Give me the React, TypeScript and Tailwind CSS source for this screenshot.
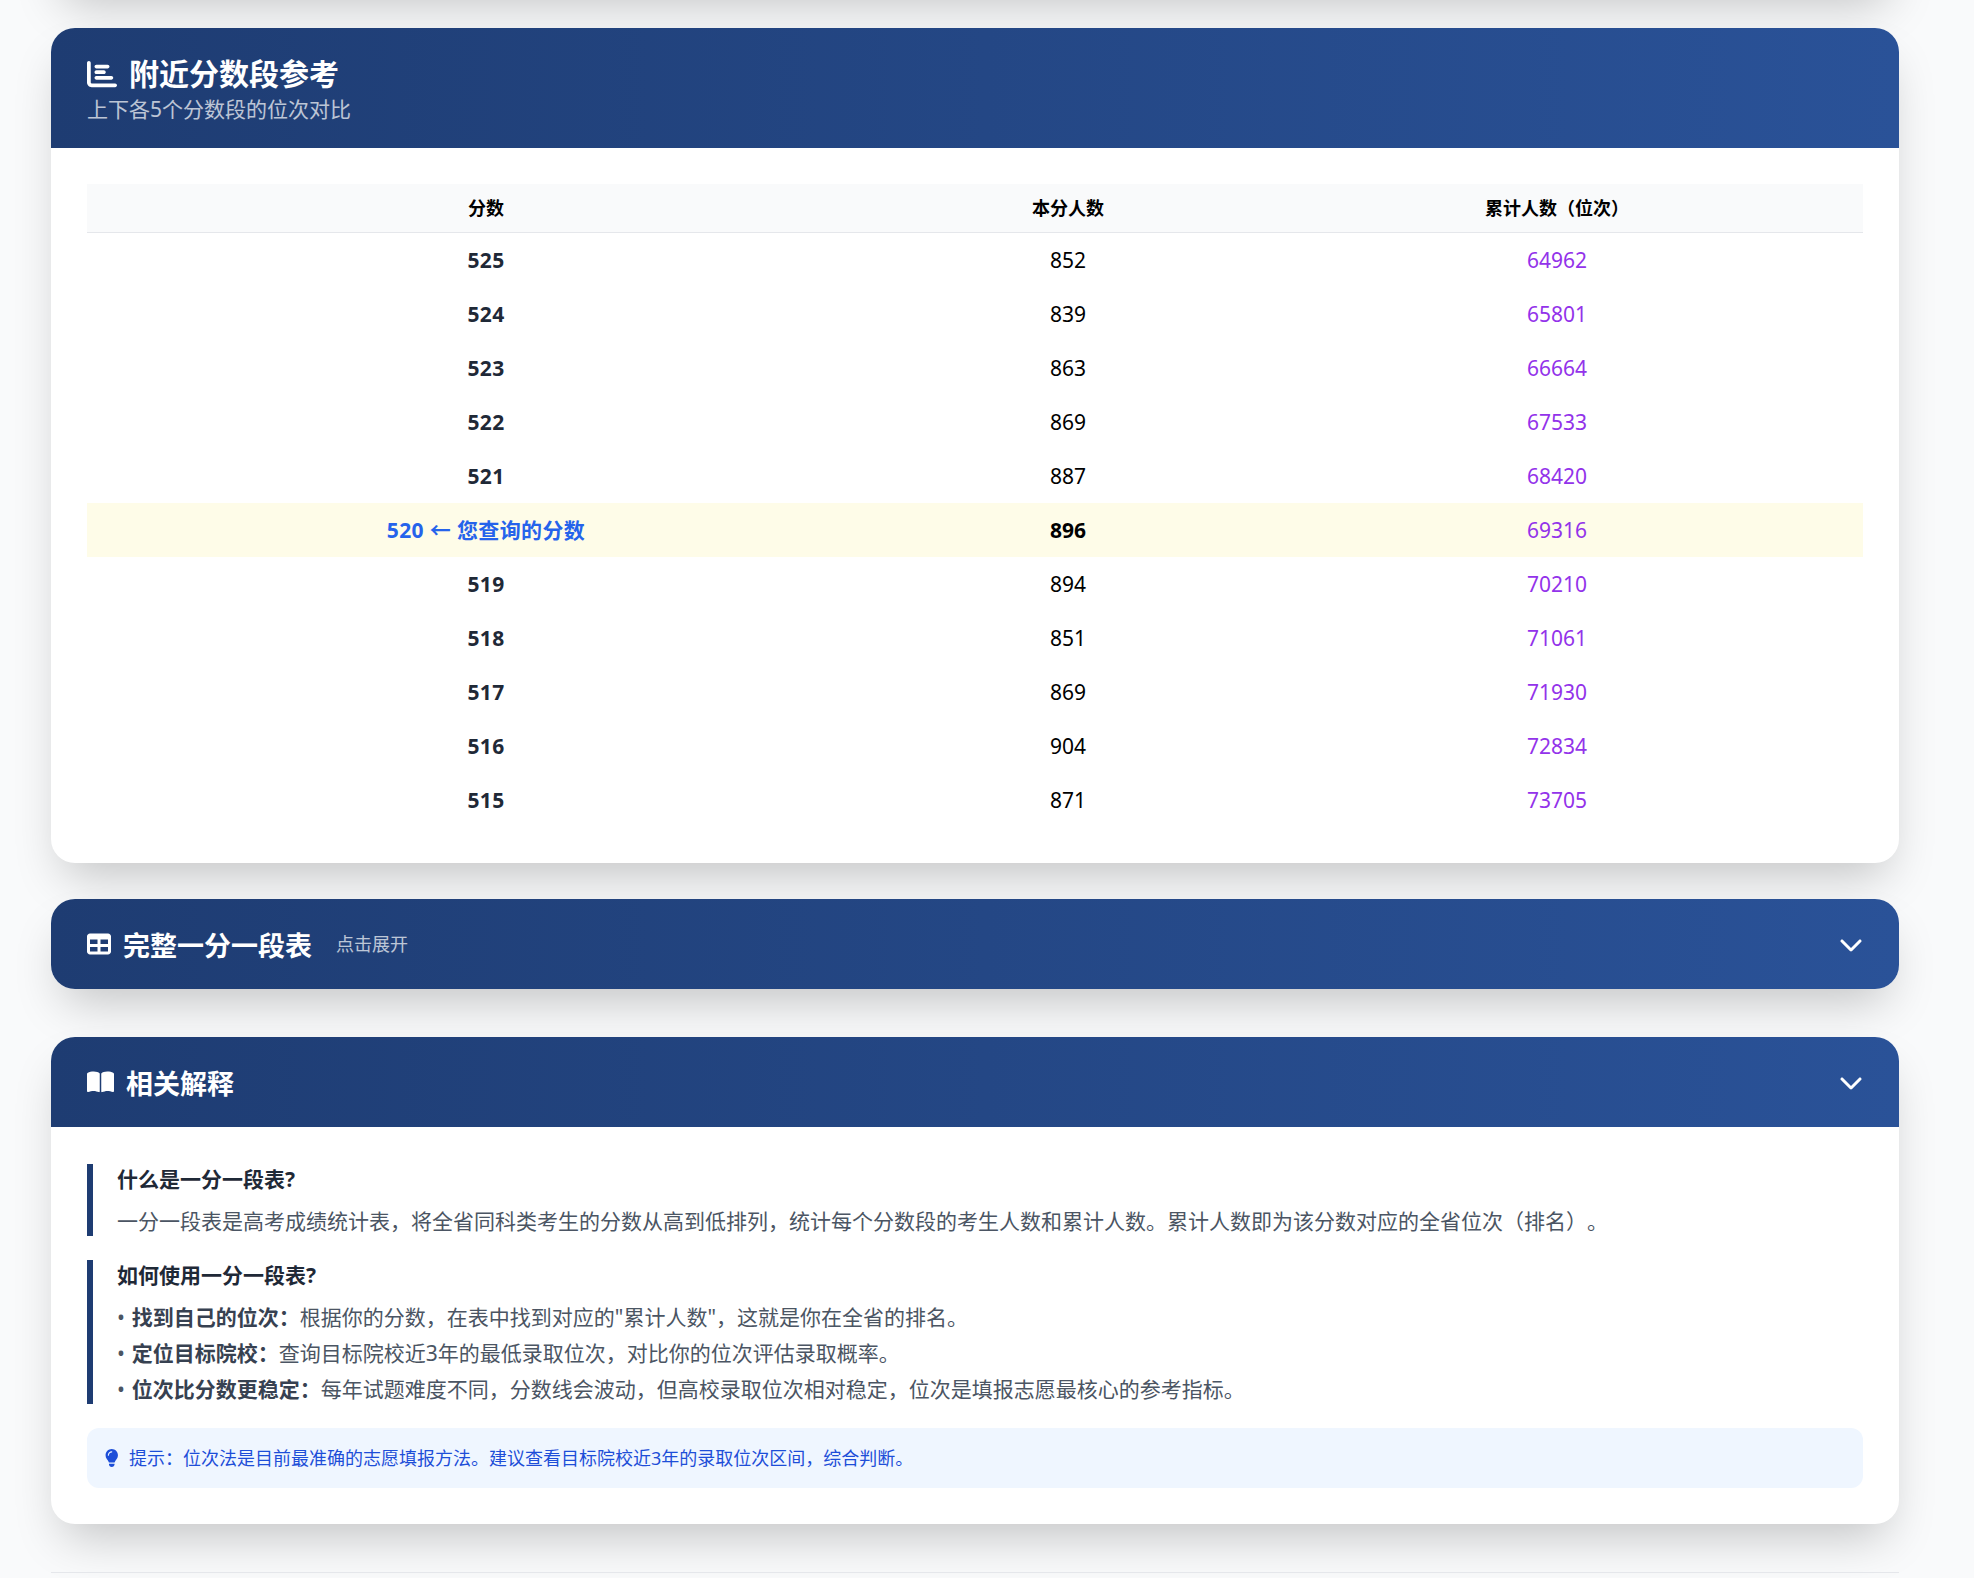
import { FaBookOpen, FaChartBar, FaChevronDown, FaLightbulb, FaTable } from "react-icons/fa6";

const rows = [
  { score: "525", count: "852", total: "64962" },
  { score: "524", count: "839", total: "65801" },
  { score: "523", count: "863", total: "66664" },
  { score: "522", count: "869", total: "67533" },
  { score: "521", count: "887", total: "68420" },
  { score: "520", count: "896", total: "69316", active: true },
  { score: "519", count: "894", total: "70210" },
  { score: "518", count: "851", total: "71061" },
  { score: "517", count: "869", total: "71930" },
  { score: "516", count: "904", total: "72834" },
  { score: "515", count: "871", total: "73705" },
];

const card = "bg-white rounded-2xl shadow-[0_16px_32px_-8px_rgba(0,0,0,0.22)] overflow-hidden";
const head = "bg-gradient-to-r from-[#1e3c72] to-[#2a5298] text-white";

export default function App() {
  return (
    <div className="h-[1578px] w-[1974px] overflow-hidden bg-[#f9fafb]">
      <div
        className="[zoom:1.5] w-[1300px] text-black [text-spacing-trim:space-all]"
        style={{ fontFamily: '"Noto Sans", "Noto Sans CJK SC", sans-serif' }}
      >
        <div className="mx-auto max-w-7xl px-6">
          <div className={`${card} -mt-[105.1px] mb-6 h-[100px]`} />

          <section className={`${card} mb-6`}>
            <header className={`${head} px-6 py-4`}>
              <h2 className="flex h-7 items-center pt-[1px] text-xl leading-7 font-bold">
                <FaChartBar className="mr-2 size-5" />
                附近分数段参考
              </h2>
              <p className="text-sm leading-5 opacity-70">上下各5个分数段的位次对比</p>
            </header>
            <div className="p-6">
              <table className="w-full border-collapse text-sm">
                <thead>
                  <tr className="border-b border-[#e5e7eb] bg-[#f9fafb] text-xs">
                    <th className="w-[532px] px-4 py-2 font-bold">分数</th>
                    <th className="w-[244px] px-4 py-2 font-bold">本分人数</th>
                    <th className="px-4 py-2 font-bold">累计人数（位次）</th>
                  </tr>
                </thead>
                <tbody>
                  {rows.map((r) => (
                    <tr key={r.score} className={r.active ? "bg-[#fefce8]" : ""}>
                      <td className={`px-4 py-2 text-center font-bold tracking-[0.25px] ${r.active ? "text-[#2563eb]" : "text-[#1f2937]"}`}>
                        {r.active ? `${r.score} ← 您查询的分数` : r.score}
                      </td>
                      <td className={`px-4 py-2 text-center ${r.active ? "font-bold" : ""}`}>{r.count}</td>
                      <td className="px-4 py-2 text-center text-[#9333ea]">{r.total}</td>
                    </tr>
                  ))}
                </tbody>
              </table>
            </div>
          </section>

          <section className={`${card} mb-8`}>
            <header className={`${head} flex items-center justify-between px-6 py-4`}>
              <div className="flex items-center">
                <FaTable className="mr-2 size-4" />
                <h2 className="h-7 pt-[1px] text-lg leading-7 font-bold">完整一分一段表</h2>
                <span className="ml-4 text-xs opacity-70">点击展开</span>
              </div>
              <FaChevronDown className="size-4" />
            </header>
          </section>

          <section className={card}>
            <header className={`${head} flex items-center justify-between px-6 py-4`}>
              <div className="flex items-center">
                <FaBookOpen className="mr-2 h-4 w-[18px]" />
                <h2 className="h-7 pt-[1px] text-lg leading-7 font-bold">相关解释</h2>
              </div>
              <FaChevronDown className="size-4" />
            </header>
            <div className="p-6 pt-[24.7px]">
              <div className="flex flex-col gap-4">
                <div className="border-l-4 border-[#1e3c72] pl-4">
                  <h3 className="mb-2 text-sm leading-5 font-bold text-[#1f2937]">什么是一分一段表?</h3>
                  <p className="text-sm leading-5 text-[#4b5563]">
                    一分一段表是高考成绩统计表，将全省同科类考生的分数从高到低排列，统计每个分数段的考生人数和累计人数。累计人数即为该分数对应的全省位次（排名）。
                  </p>
                </div>
                <div className="border-l-4 border-[#1e3c72] pl-4">
                  <h3 className="mb-2 text-sm leading-5 font-bold text-[#1f2937]">如何使用一分一段表?</h3>
                  <ul className="flex flex-col gap-1 text-sm leading-5 text-[#4b5563]">
                    <li>• <strong className="ml-px text-[#374151]">找到自己的位次：</strong>根据你的分数，在表中找到对应的"累计人数"，这就是你在全省的排名。</li>
                    <li>• <strong className="ml-px text-[#374151]">定位目标院校：</strong>查询目标院校近3年的最低录取位次，对比你的位次评估录取概率。</li>
                    <li>• <strong className="ml-px text-[#374151]">位次比分数更稳定：</strong>每年试题难度不同，分数线会波动，但高校录取位次相对稳定，位次是填报志愿最核心的参考指标。</li>
                  </ul>
                </div>
              </div>
              <div className="mt-4 flex items-center rounded-lg bg-[#eff6ff] p-3 text-xs leading-4 text-[#1d4ed8]">
                <FaLightbulb className="mr-[7px] h-3 w-[9px]" />
                提示：位次法是目前最准确的志愿填报方法。建议查看目标院校近3年的录取位次区间，综合判断。
              </div>
            </div>
          </section>

          <footer className="mt-8 h-10 border-t border-[#e5e7eb]" />
        </div>
      </div>
    </div>
  );
}
